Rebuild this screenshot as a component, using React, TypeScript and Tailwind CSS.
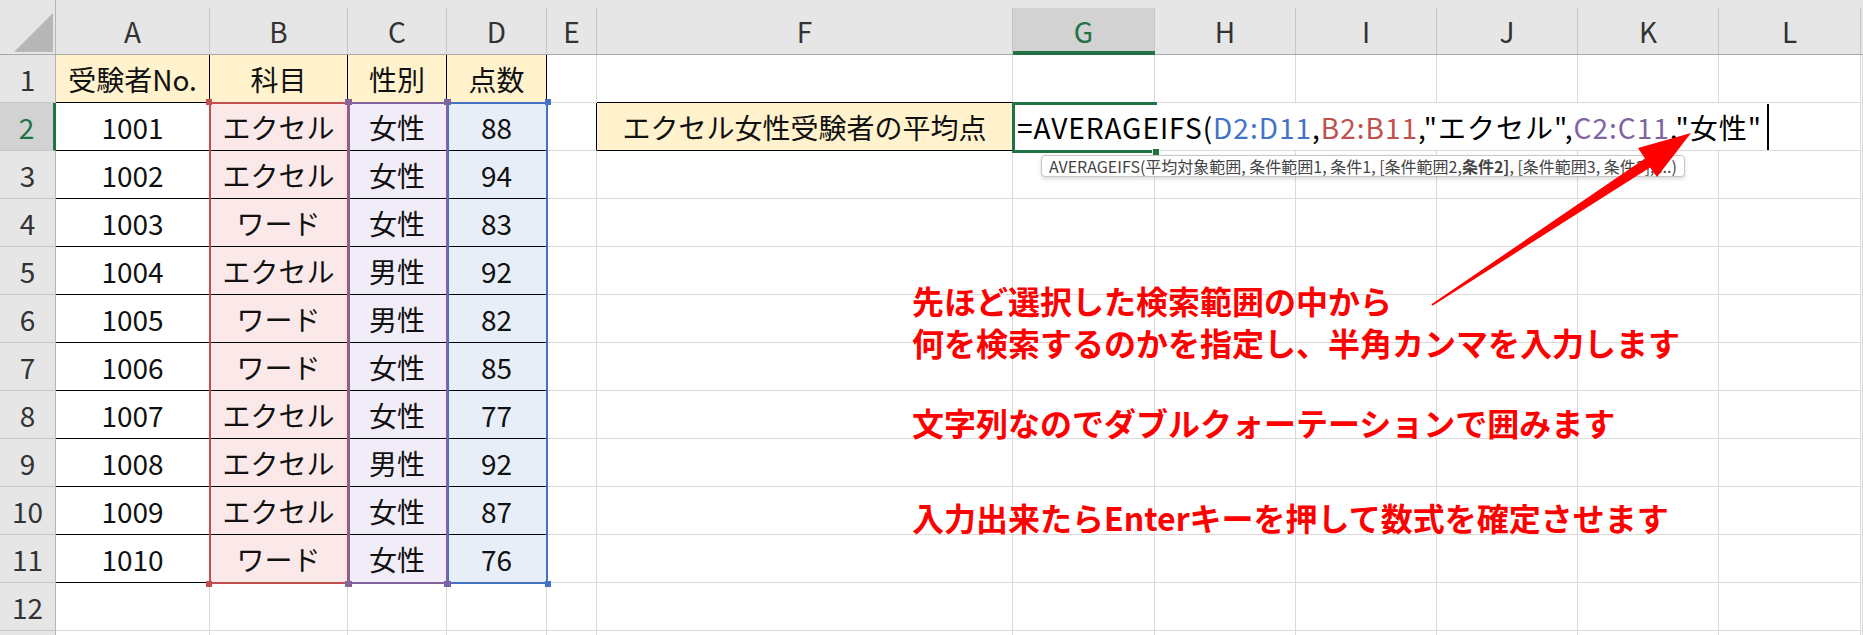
import React from 'react';

const COLS = ['A', 'B', 'C', 'D', 'E', 'F', 'G', 'H', 'I', 'J', 'K', 'L', ''];

const DATA: string[][] = [
  ['受験者No.', '科目', '性別', '点数'],
  ['1001', 'エクセル', '女性', '88'],
  ['1002', 'エクセル', '女性', '94'],
  ['1003', 'ワード', '女性', '83'],
  ['1004', 'エクセル', '男性', '92'],
  ['1005', 'ワード', '男性', '82'],
  ['1006', 'ワード', '女性', '85'],
  ['1007', 'エクセル', '女性', '77'],
  ['1008', 'エクセル', '男性', '92'],
  ['1009', 'エクセル', '女性', '87'],
  ['1010', 'ワード', '女性', '76'],
];

const DATA_BG = ['bg-white', 'bg-[#fbe9e9]', 'bg-[#f1edf8]', 'bg-[#e8eef8]'];

type CellSpec = { text?: string; bg: string; br: string; bb: string };

function spec(r: number, c: number): CellSpec {
  let s: CellSpec = { bg: 'bg-white', br: 'border-r-[#dadada]', bb: 'border-b-[#dadada]' };
  if (r === 1 && c <= 3) {
    s = { text: DATA[0][c], bg: 'bg-[#fff2cc]', br: 'border-r-black', bb: 'border-b-black' };
  } else if (r >= 2 && r <= 11 && c <= 3) {
    s = { text: DATA[r - 1][c], bg: DATA_BG[c], br: 'border-r-black', bb: 'border-b-black' };
  } else if (r === 1 && c === 5) {
    s = { ...s, bb: 'border-b-black' };
  } else if (r === 2 && c === 4) {
    s = { ...s, br: 'border-r-black' };
  } else if (r === 2 && c === 5) {
    s = { text: 'エクセル女性受験者の平均点', bg: 'bg-[#fff2cc]', br: 'border-r-black', bb: 'border-b-black' };
  }
  return s;
}

function RangeBox({ left, top, width, height, color, sq }: { left: number; top: number; width: number; height: number; color: string; sq: string }) {
  return (
    <div className="pointer-events-none absolute" style={{ left, top, width, height }}>
      <div className={`absolute inset-0 border-2 ${color}`} />
      <div className={`absolute -left-[3px] -top-[3px] h-[6px] w-[6px] ${sq}`} />
      <div className={`absolute -right-[3px] -top-[3px] h-[6px] w-[6px] ${sq}`} />
      <div className={`absolute -left-[3px] -bottom-[3px] h-[6px] w-[6px] ${sq}`} />
      <div className={`absolute -right-[3px] -bottom-[3px] h-[6px] w-[6px] ${sq}`} />
    </div>
  );
}

export default function App() {
  const cells: React.ReactNode[] = [];

  cells.push(
    <div key="corner" className="relative border-r border-b border-r-[#b5b5b5] border-b-[#a9a9a9] bg-[#e6e6e6]">
      <svg className="absolute left-0 top-0" width="56" height="55">
        <polygon points="14,52 53,13 53,52" fill="#b6b6b6" />
      </svg>
    </div>
  );
  COLS.forEach((col, i) => {
    const sel = col === 'G';
    cells.push(
      <div
        key={'h' + i}
        className={`relative flex flex-col border-b ${sel ? 'border-b-[#217346]' : 'border-b-[#a9a9a9]'} bg-[#e6e6e6]`}
      >
        <div className={`mt-[8px] flex flex-1 items-center justify-center ${i < COLS.length - 1 ? 'border-r border-r-[#c6c6c6]' : ''} ${sel ? 'bg-[#d2d2d2] text-[#217346]' : 'text-[#333]'}`}>
          {col}
        </div>
        {sel && <div className="absolute bottom-0 left-0 right-0 h-[3px] bg-[#217346]" />}
      </div>
    );
  });

  for (let r = 1; r <= 12; r++) {
    const sel = r === 2;
    cells.push(
      <div
        key={'rh' + r}
        className={`flex items-center justify-center border-b border-b-[#c8c8c8] ${sel ? 'border-r-[3px] border-r-[#217346] bg-[#d2d2d2] text-[#217346]' : 'border-r border-r-[#b5b5b5] bg-[#e6e6e6] text-[#333]'}`}
      >
        {r}
      </div>
    );
    for (let c = 0; c < COLS.length; c++) {
      if (r === 2 && c === 6) {
        cells.push(
          <div
            key={'f'}
            className="relative z-10 col-span-6 flex items-center overflow-visible whitespace-nowrap border-r border-b border-r-[#dadada] border-b-[#dadada] pl-[4px] text-[28px] tracking-[1px] text-black"
          >
            <span>=AVERAGEIFS(</span>
            <span className="text-[#4472c4]">D2:D11</span>
            <span>,</span>
            <span className="text-[#c0504d]">B2:B11</span>
            <span>,"エクセル",</span>
            <span className="text-[#8064a2]">C2:C11</span>
            <span>,"女性"</span>
            <span className="ml-[5px] inline-block h-[46px] w-[2px] bg-black" />
          </div>
        );
        c = 11;
        continue;
      }
      const s = spec(r, c);
      cells.push(
        <div
          key={`c${r}-${c}`}
          className={`flex items-center justify-center whitespace-nowrap border-r border-b ${s.br} ${s.bb} ${s.bg} text-[#111]`}
        >
          {s.text}
        </div>
      );
    }
  }
  cells.push(<div key="rh13" className="border-r border-r-[#b5b5b5] bg-[#e6e6e6]" />);
  for (let c = 0; c < COLS.length; c++) {
    cells.push(<div key={'c13-' + c} className="border-r border-r-[#dadada] bg-white" />);
  }

  return (
    <div className="relative h-[635px] w-[1863px] overflow-hidden bg-white font-['Noto_Sans_CJK_JP','Noto_Sans',sans-serif] text-[28px] leading-none">
      {/* active cell (behind formula text) */}
      <div className="pointer-events-none absolute left-[1012px] top-[102px] z-0 h-[51px] w-[145px] border-[3px] border-r-0 border-[#217346]" />

      <div className="grid grid-cols-[56px_154px_138px_99px_100px_50px_416px_142px_141px_141px_141px_141px_142px_2px] grid-rows-[55px_repeat(12,48px)_4px]">
        {cells}
      </div>

      {/* active cell outline drawn on top except right edge */}
      <div className="pointer-events-none absolute left-[1012px] top-[102px] z-20 h-[51px] w-[145px] border-[3px] border-r-0 border-[#217346]" />
      <div className="pointer-events-none absolute left-[1152px] top-[148px] z-20 h-[8px] w-[8px] border border-white bg-[#217346]" />

      {/* range highlights */}
      <RangeBox left={209} top={102} width={140} height={482} color="border-[#c0504d]" sq="bg-[#c0504d]" />
      <RangeBox left={447} top={102} width={101} height={482} color="border-[#4472c4]" sq="bg-[#4472c4]" />
      <RangeBox left={348} top={102} width={100} height={482} color="border-[#8064a2]" sq="bg-[#8064a2]" />

      {/* tooltip */}
      <div className="absolute left-[1041px] top-[155px] z-20 flex h-[22px] items-center whitespace-nowrap rounded-[4px] border border-[#c6c6c6] bg-white px-[7px] text-[16px] text-[#444] shadow-[0_2px_4px_rgba(0,0,0,0.15)]">
        AVERAGEIFS(平均対象範囲, 条件範囲1, 条件1, [条件範囲2, <span className="font-bold">条件2]</span>, [条件範囲3, 条件3], ...)
      </div>

      {/* arrow */}
      <svg className="pointer-events-none absolute left-0 top-0 z-30" width="1863" height="635">
        <polygon
          points="1432.5,305.8 1650,167.5 1657,177 1691,133 1638,148 1645,158.5 1431.5,304.2"
          fill="#f00"
        />
      </svg>

      {/* annotation */}
      <div className="absolute left-[912px] top-[281px] z-30 flex flex-col text-[32px] font-bold leading-[38px] text-[#f00]">
        <div>先ほど選択した検索範囲の中から</div>
        <div className="mt-[4px]">何を検索するのかを指定し、半角カンマを入力します</div>
        <div className="mt-[42px]">文字列なのでダブルクォーテーションで囲みます</div>
        <div className="mt-[57px]">入力出来たらEnterキーを押して数式を確定させます</div>
      </div>
    </div>
  );
}
